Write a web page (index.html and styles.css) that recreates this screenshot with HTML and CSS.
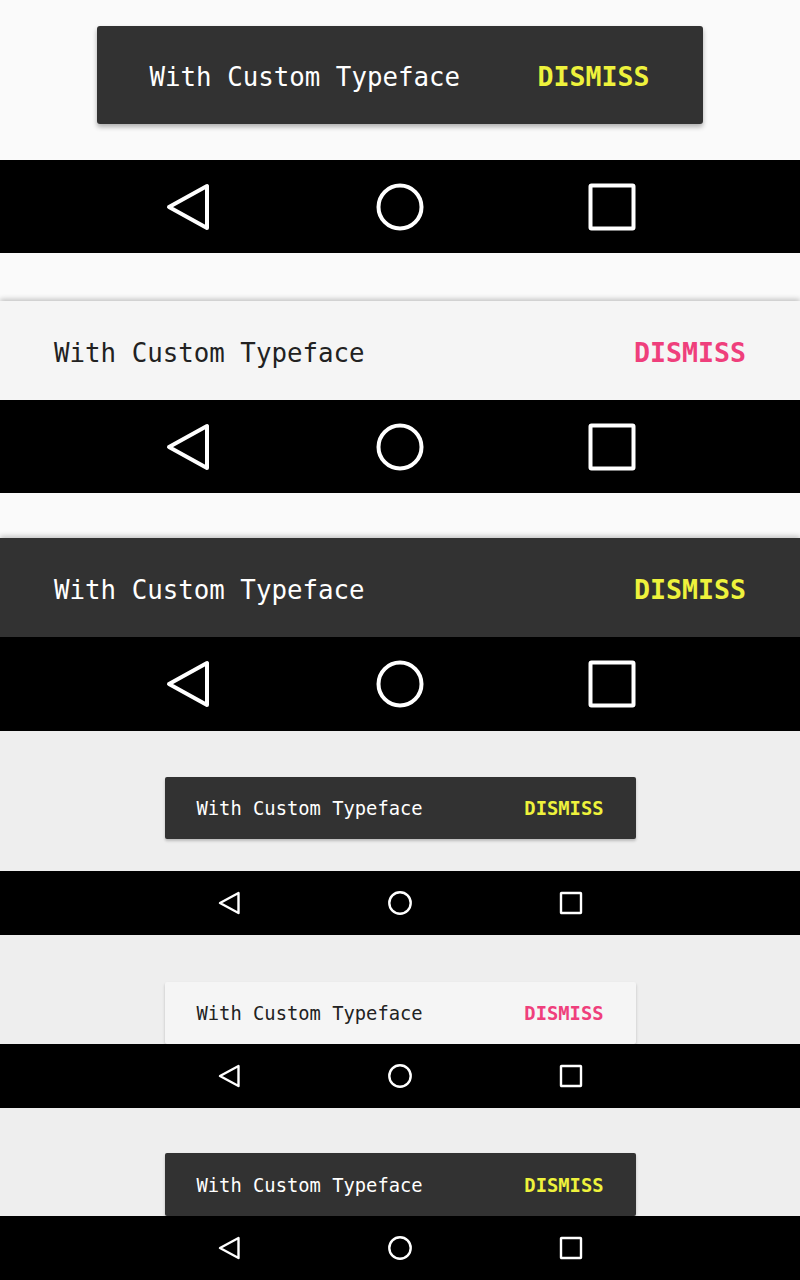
FILE: index.html
```html
<!DOCTYPE html>
<html lang="en">
<head>
<meta charset="utf-8">
<title>Snackbar Custom Typeface</title>
<link rel="stylesheet" href="styles.css">
</head>
<body>
  <section class="screen screen-large screen-float s1">
    <div class="stage">
      <div class="snackbar snackbar-lg snackbar-dark floating">
        <span class="msg">With Custom Typeface</span>
        <span class="action yellow">DISMISS</span>
      </div>
    </div>
    <nav class="navbar navbar-lg">
      <svg class="icon" viewBox="0 0 48 48"><path d="M5 24 L43 3 L43 45 Z"/></svg>
      <svg class="icon" viewBox="0 0 48 48"><circle cx="24" cy="24" r="21.5"/></svg>
      <svg class="icon" viewBox="0 0 48 48"><rect x="2.5" y="2.5" width="43" height="43" rx="1"/></svg>
    </nav>
  </section>

  <section class="screen screen-large s2">
    <div class="spacer"></div>
    <div class="snackbar snackbar-full snackbar-light">
      <span class="msg">With Custom Typeface</span>
      <span class="action pink">DISMISS</span>
    </div>
    <nav class="navbar navbar-lg">
      <svg class="icon" viewBox="0 0 48 48"><path d="M5 24 L43 3 L43 45 Z"/></svg>
      <svg class="icon" viewBox="0 0 48 48"><circle cx="24" cy="24" r="21.5"/></svg>
      <svg class="icon" viewBox="0 0 48 48"><rect x="2.5" y="2.5" width="43" height="43" rx="1"/></svg>
    </nav>
  </section>

  <section class="screen screen-large s3">
    <div class="spacer"></div>
    <div class="snackbar snackbar-full snackbar-dark">
      <span class="msg">With Custom Typeface</span>
      <span class="action yellow">DISMISS</span>
    </div>
    <nav class="navbar navbar-lg">
      <svg class="icon" viewBox="0 0 48 48"><path d="M5 24 L43 3 L43 45 Z"/></svg>
      <svg class="icon" viewBox="0 0 48 48"><circle cx="24" cy="24" r="21.5"/></svg>
      <svg class="icon" viewBox="0 0 48 48"><rect x="2.5" y="2.5" width="43" height="43" rx="1"/></svg>
    </nav>
  </section>

  <section class="screen screen-small s4">
    <div class="stage">
      <div class="snackbar snackbar-sm snackbar-dark floating-sm">
        <span class="msg">With Custom Typeface</span>
        <span class="action yellow">DISMISS</span>
      </div>
    </div>
    <nav class="navbar navbar-sm">
      <svg class="icon" viewBox="0 0 24 24"><path d="M3 12 L21.5 2 L21.5 22 Z"/></svg>
      <svg class="icon" viewBox="0 0 24 24"><circle cx="12" cy="12" r="10.7"/></svg>
      <svg class="icon" viewBox="0 0 24 24"><rect x="2" y="2" width="20" height="20" rx="0.5"/></svg>
    </nav>
  </section>

  <section class="screen screen-small s5">
    <div class="stage">
      <div class="snackbar snackbar-sm snackbar-light floating-sm">
        <span class="msg">With Custom Typeface</span>
        <span class="action pink">DISMISS</span>
      </div>
    </div>
    <nav class="navbar navbar-sm">
      <svg class="icon" viewBox="0 0 24 24"><path d="M3 12 L21.5 2 L21.5 22 Z"/></svg>
      <svg class="icon" viewBox="0 0 24 24"><circle cx="12" cy="12" r="10.7"/></svg>
      <svg class="icon" viewBox="0 0 24 24"><rect x="2" y="2" width="20" height="20" rx="0.5"/></svg>
    </nav>
  </section>

  <section class="screen screen-small s6">
    <div class="stage">
      <div class="snackbar snackbar-sm snackbar-dark floating-sm">
        <span class="msg">With Custom Typeface</span>
        <span class="action yellow">DISMISS</span>
      </div>
    </div>
    <nav class="navbar navbar-sm">
      <svg class="icon" viewBox="0 0 24 24"><path d="M3 12 L21.5 2 L21.5 22 Z"/></svg>
      <svg class="icon" viewBox="0 0 24 24"><circle cx="12" cy="12" r="10.7"/></svg>
      <svg class="icon" viewBox="0 0 24 24"><rect x="2" y="2" width="20" height="20" rx="0.5"/></svg>
    </nav>
  </section>
</body>
</html>
```

FILE: styles.css
```css
* { box-sizing: border-box; }

html, body {
  margin: 0;
  padding: 0;
}

body {
  width: 800px;
  height: 1280px;
  overflow: hidden;
  font-family: "DejaVu Sans Mono", "Liberation Mono", monospace;
  background: #fafafa;
}

.screen {
  display: flex;
  flex-direction: column;
}

.screen-large { background: #fafafa; }
.screen-small { background: #eeeeee; }

.stage {
  display: flex;
  justify-content: center;
}

.s1 .stage { padding: 26px 0 36px 0; }
.s2 .spacer { height: 48px; }
.s3 .spacer { height: 45px; }
.s4 .stage { padding: 46px 0 32px; }
.s5 .stage { padding: 47px 0 0; }
.s6 .stage { padding: 45px 0 0; }

.snackbar {
  display: flex;
  align-items: center;
  justify-content: space-between;
  position: relative;
  z-index: 1;
}

.snackbar-dark { background: #323232; color: #ffffff; }
.snackbar-light { background: #f5f5f5; color: #222222; }

.snackbar-lg {
  width: 606px;
  height: 98px;
  padding: 3px 53px 0;
  border-radius: 3px;
  margin-left: -1px;
}

.snackbar-full {
  width: 100%;
  height: 99px;
  padding: 4px 54px 0;
  box-shadow: 0 -2px 5px rgba(0, 0, 0, 0.22);
}

.snackbar-sm {
  width: 471px;
  height: 62px;
  padding: 1px 32px 0;
  border-radius: 2px;
}

.s6 .snackbar-sm { height: 63px; }

.floating { box-shadow: 0 3px 5px rgba(0, 0, 0, 0.3); }
.floating-sm { box-shadow: 0 2px 3px rgba(0, 0, 0, 0.22); }

.msg {
  font-size: 25.8px;
  white-space: nowrap;
}

.action {
  font-weight: bold;
  font-size: 26.6px;
  white-space: nowrap;
}

.snackbar-sm .msg { font-size: 18.8px; }
.snackbar-sm .action { font-size: 18.8px; }

.yellow { color: #eef23c; }
.pink { color: #ef3f7c; }

.navbar {
  background: #000000;
  display: flex;
  align-items: center;
  justify-content: center;
}

.navbar .icon {
  fill: none;
  stroke: #ffffff;
  stroke-linejoin: round;
}

.navbar-lg {
  height: 93px;
  gap: 164px;
}

.s3 .navbar-lg { height: 94px; }

.navbar-lg .icon {
  width: 48px;
  height: 48px;
  stroke-width: 4;
}

.navbar-sm {
  height: 64px;
  gap: 147px;
}

.navbar-sm .icon {
  width: 24px;
  height: 24px;
  stroke-width: 2.4;
}
```
